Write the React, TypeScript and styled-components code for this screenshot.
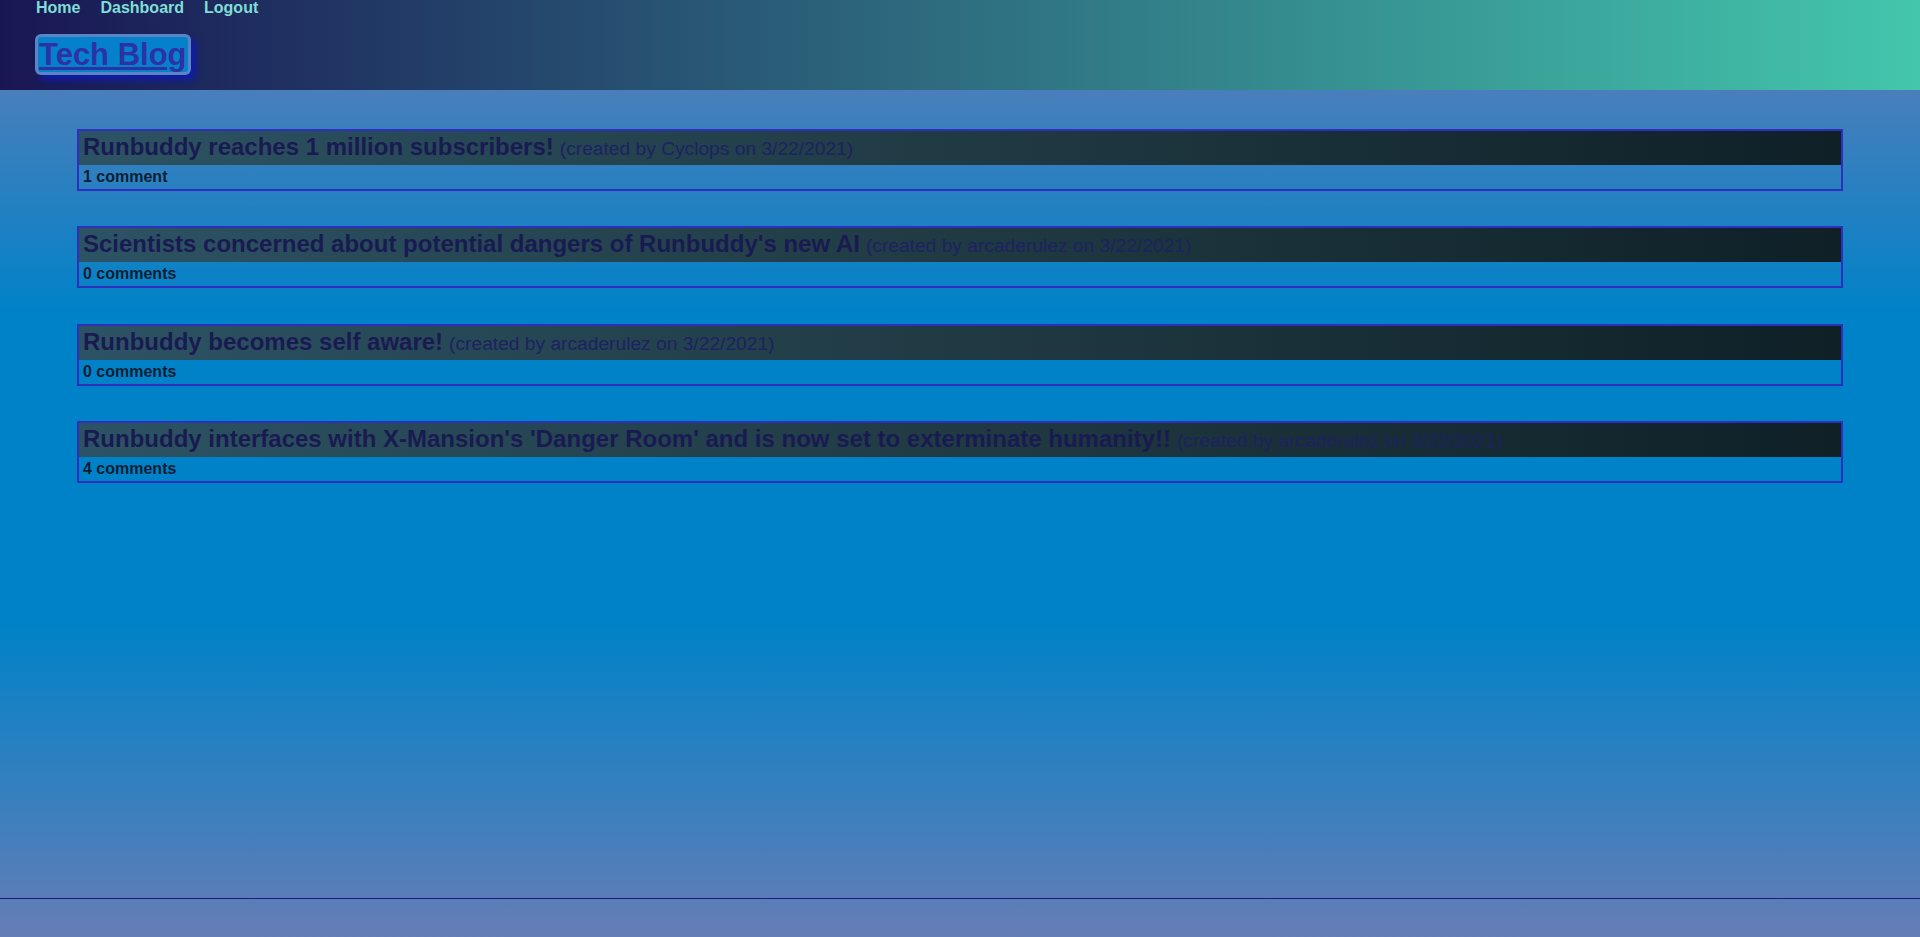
import React from "react";
import styled, { createGlobalStyle } from "styled-components";

const GlobalStyle = createGlobalStyle`
  html, body {
    margin: 0;
    padding: 0;
  }
  body {
    font-family: "Liberation Sans", Arial, Helvetica, sans-serif;
    background: linear-gradient(to bottom, #667db6, #0082c8, #0082c8, #667db6);
    min-height: 100vh;
  }
`;

const Page = styled.div`
  min-height: 100vh;
  display: flex;
  flex-direction: column;
`;

const Header = styled.header`
  height: 90px;
  box-sizing: border-box;
  padding: 0 36px;
  background: linear-gradient(to right, #191654, #43c6ac);
  display: flex;
  flex-direction: column;
  align-items: flex-start;
`;

const Nav = styled.nav`
  display: flex;
  gap: 20px;
  line-height: 16px;
`;

const NavLink = styled.a`
  color: #7fdfd4;
  font-size: 16px;
  font-weight: bold;
  text-decoration: none;
`;

const Brand = styled.h1`
  margin: 18px 0 0 -1px;
  padding: 3px;
  border-radius: 6px;
  background: #5b84c4;
  box-shadow: 5px 5px 6px #0f1ca8;
  font-size: 31px;
  line-height: 35px;
  display: flex;
`;

const BrandLink = styled.a`
  display: block;
  padding: 0 1px;
  border-radius: 3px;
  background: #0581cc;
  color: #2c31a3;
  text-decoration: underline;
`;

const Main = styled.main`
  flex: 1;
  padding: 39px 77px 0;
  display: flex;
  flex-direction: column;
  gap: 35.3px;
`;

const Post = styled.article`
  border: 2px solid #2e2fbf;
  display: flex;
  flex-direction: column;
`;

const PostTitleBar = styled.div`
  height: 34px;
  box-sizing: border-box;
  padding: 2px 4px 0;
  background: linear-gradient(to left, #0f2027, #203a43, #2c5364);
  white-space: nowrap;
  overflow: hidden;
`;

const PostTitle = styled.span`
  font-size: 24px;
  font-weight: bold;
  color: #1a1a52;
  line-height: 28px;
`;

const PostMeta = styled.span`
  font-size: 19.2px;
  color: #1c2262;
  margin-left: 6px;
`;

const CommentCount = styled.div`
  height: 24px;
  box-sizing: border-box;
  padding: 3px 4px 0;
  font-size: 16px;
  font-weight: bold;
  line-height: 18px;
  color: #0d1e33;
`;

const Footer = styled.footer`
  height: 38px;
  border-top: 1px solid #28147f;
`;

const posts = [
  {
    title: "Runbuddy reaches 1 million subscribers!",
    author: "Cyclops",
    date: "3/22/2021",
    comments: "1 comment",
  },
  {
    title: "Scientists concerned about potential dangers of Runbuddy's new AI",
    author: "arcaderulez",
    date: "3/22/2021",
    comments: "0 comments",
  },
  {
    title: "Runbuddy becomes self aware!",
    author: "arcaderulez",
    date: "3/22/2021",
    comments: "0 comments",
  },
  {
    title:
      "Runbuddy interfaces with X-Mansion's 'Danger Room' and is now set to exterminate humanity!!",
    author: "arcaderulez",
    date: "3/22/2021",
    comments: "4 comments",
  },
];

export default function App() {
  return (
    <>
      <GlobalStyle />
      <Page>
        <Header>
          <Nav>
            <NavLink href="#">Home</NavLink>
            <NavLink href="#">Dashboard</NavLink>
            <NavLink href="#">Logout</NavLink>
          </Nav>
          <Brand>
            <BrandLink href="#">Tech Blog</BrandLink>
          </Brand>
        </Header>
        <Main>
          {posts.map((p) => (
            <Post key={p.title}>
              <PostTitleBar>
                <PostTitle>{p.title}</PostTitle>
                <PostMeta>
                  (created by {p.author} on {p.date})
                </PostMeta>
              </PostTitleBar>
              <CommentCount>{p.comments}</CommentCount>
            </Post>
          ))}
        </Main>
        <Footer />
      </Page>
    </>
  );
}
